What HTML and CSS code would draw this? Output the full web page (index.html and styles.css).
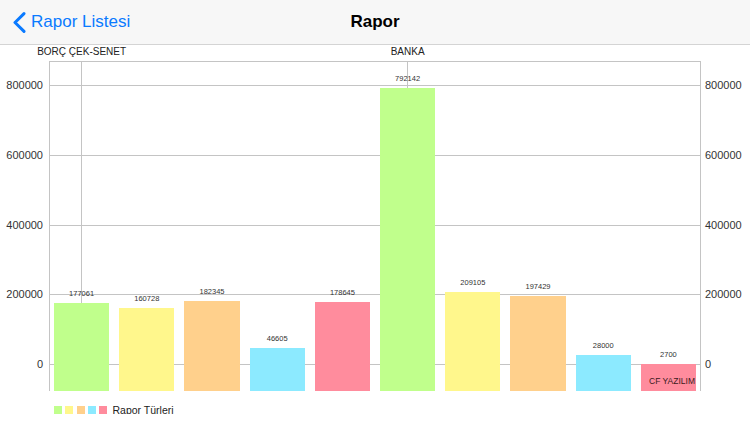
FILE: index.html
```html
<!DOCTYPE html>
<html lang="tr">
<head>
    <meta charset="UTF-8">
    <meta name="viewport" content="width=device-width, initial-scale=1.0">
    <title>Rapor</title>
    <link rel="stylesheet" href="styles.css">
</head>
<body>
    <div class="nav-bar">
        <a class="back-btn" href="#">
            <svg class="chevron" width="13" height="21" viewBox="0 0 13 21">
                <polyline points="11,1.6 2,10.5 11,19.4" fill="none" stroke="#0a7aff" stroke-width="3" stroke-linecap="round" stroke-linejoin="round"/>
            </svg>
            <span>Rapor Listesi</span>
        </a>
        <div class="nav-title">Rapor</div>
        <div></div>
    </div>

    <div class="chart">
        <div class="x-labels">
            <div class="x-cell"><span>BORÇ ÇEK-SENET</span></div>
            <div class="x-cell"></div>
            <div class="x-cell"></div>
            <div class="x-cell"></div>
            <div class="x-cell"></div>
            <div class="x-cell"><span>BANKA</span></div>
            <div class="x-cell"></div>
            <div class="x-cell"></div>
            <div class="x-cell"></div>
            <div class="x-cell"></div>
        </div>

        <div class="plot">
            <div class="grid-line" style="top:24px"><span class="y-left">800000</span><span class="y-right">800000</span></div>
            <div class="grid-line" style="top:94px"><span class="y-left">600000</span><span class="y-right">600000</span></div>
            <div class="grid-line" style="top:164px"><span class="y-left">400000</span><span class="y-right">400000</span></div>
            <div class="grid-line" style="top:233px"><span class="y-left">200000</span><span class="y-right">200000</span></div>
            <div class="grid-line" style="top:303px"><span class="y-left">0</span><span class="y-right">0</span></div>

            <div class="cell marked"><div class="val">177061</div><div class="bar green" style="height:88.3px"></div></div>
            <div class="cell"><div class="val">160728</div><div class="bar yellow" style="height:82.6px"></div></div>
            <div class="cell"><div class="val">182345</div><div class="bar orange" style="height:90.1px"></div></div>
            <div class="cell"><div class="val">46605</div><div class="bar cyan" style="height:42.8px"></div></div>
            <div class="cell"><div class="val">178645</div><div class="bar pink" style="height:88.8px"></div></div>
            <div class="cell marked"><div class="val">792142</div><div class="bar green" style="height:302.8px"></div></div>
            <div class="cell"><div class="val">209105</div><div class="bar yellow" style="height:99.4px"></div></div>
            <div class="cell"><div class="val">197429</div><div class="bar orange" style="height:95.4px"></div></div>
            <div class="cell"><div class="val">28000</div><div class="bar cyan" style="height:36.3px"></div></div>
            <div class="cell"><div class="val">2700</div><div class="bar pink" style="height:27.4px"></div></div>

            <div class="description">CF YAZILIM</div>
        </div>

        <div class="legend">
            <span class="swatch green"></span>
            <span class="swatch yellow"></span>
            <span class="swatch orange"></span>
            <span class="swatch cyan"></span>
            <span class="swatch pink"></span>
            <span class="legend-text">Rapor Türleri</span>
        </div>
    </div>
</body>
</html>
```

FILE: styles.css
```css
body {
    font-family: "Liberation Sans", Arial, sans-serif;
    margin: 0;
    padding: 0;
    background-color: #fff;
    color: #222;
}

.nav-bar {
    height: 44px;
    background-color: #f7f7f7;
    border-bottom: 1px solid #d4d4d4;
    display: grid;
    grid-template-columns: 1fr auto 1fr;
    align-items: center;
}
.back-btn {
    display: flex;
    align-items: center;
    gap: 5px;
    padding-left: 13px;
    color: #0a7aff;
    font-size: 17px;
    text-decoration: none;
}
.chevron {
    display: block;
}
.nav-title {
    font-size: 17px;
    font-weight: bold;
    color: #000;
}

.x-labels {
    display: flex;
    margin-left: 49px;
    width: 652px;
    height: 16px;
    padding-top: 1px;
    box-sizing: border-box;
}
.x-cell {
    flex: 1;
    min-width: 0;
    display: flex;
    justify-content: center;
    white-space: nowrap;
    font-size: 10px;
    line-height: 12px;
    color: #222;
}

.plot {
    position: relative;
    display: flex;
    margin-left: 49px;
    width: 652px;
    height: 330px;
    box-shadow: inset 1px 0 #c4c4c4, inset -1px 0 #c4c4c4, inset 0 1px #c4c4c4;
}
.grid-line {
    position: absolute;
    left: 0;
    right: 0;
    height: 1px;
    background-color: #c4c4c4;
}
.y-left,
.y-right {
    position: absolute;
    top: -7px;
    font-size: 11px;
    line-height: 14px;
    color: #333;
}
.y-left {
    right: calc(100% + 6px);
}
.y-right {
    left: calc(100% + 4px);
}

.cell {
    position: relative;
    flex: 1;
    min-width: 0;
    display: flex;
    flex-direction: column;
    justify-content: flex-end;
    padding: 0 5px;
}
.cell.marked::before {
    content: "";
    position: absolute;
    left: 50%;
    top: 0;
    bottom: 0;
    width: 1px;
    margin-left: -1px;
    background-color: #c4c4c4;
}
.val {
    position: relative;
    text-align: center;
    font-size: 7.5px;
    line-height: 10px;
    margin-bottom: 4px;
    color: #333;
}
.bar {
    position: relative;
}

.green { background-color: rgb(192, 255, 140); }
.yellow { background-color: rgb(255, 247, 140); }
.orange { background-color: rgb(255, 208, 140); }
.cyan { background-color: rgb(140, 234, 255); }
.pink { background-color: rgb(255, 140, 157); }

.description {
    position: absolute;
    right: 6px;
    bottom: 5px;
    font-size: 8.5px;
    line-height: 10px;
    color: #3a1a20;
}

.legend {
    display: flex;
    align-items: center;
    gap: 3.3px;
    padding-left: 54px;
    margin-top: 15px;
    height: 8px;
}
.swatch {
    width: 8px;
    height: 8px;
}
.legend-text {
    margin-left: 2px;
    font-size: 10.5px;
    line-height: 12px;
    color: #222;
}
```
